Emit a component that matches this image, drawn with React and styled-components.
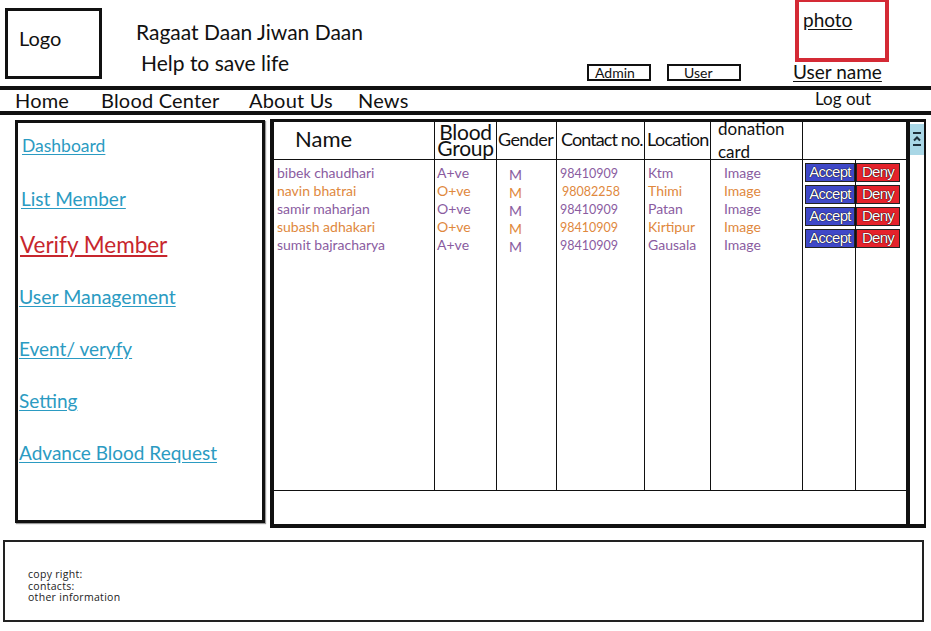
import styled, { createGlobalStyle } from 'styled-components'

const GlobalStyle = createGlobalStyle`
   body {
      margin: 0;
      background: #fff;
      font-family: Lato, "Open Sans", "Liberation Sans", sans-serif;
      color: #111;
   }
`

const Page = styled.div`
   width: 931px;
   height: 631px;
   overflow: hidden;
`

// header
const Header = styled.header`
   display: flex;
   align-items: flex-start;
   height: 86px;
`
const LogoBox = styled.div`
   margin: 8px 0 0 5px;
   width: 97px;
   height: 71px;
   box-sizing: border-box;
   border: 3px solid #111;
   display: flex;
   align-items: center;
   padding: 0 0 12px 11px;
   font-size: 20px;
`
const TitleBlock = styled.div`
   margin-left: 34px;
   width: 451px;
   padding-top: 19px;
`
const Title = styled.div`
   font-size: 21px;
   line-height: 26px;
   margin-left: ${(props) => props.$indent || 0}px;
   margin-top: ${(props) => props.$mt || 0}px;
`
const Roles = styled.div`
   display: flex;
   gap: 16px;
   margin-top: 64px;
`
const RoleBox = styled.div`
   width: ${(props) => props.$w}px;
   height: 17px;
   box-sizing: border-box;
   border: 2px solid #111;
   font-size: 14px;
   line-height: 13px;
   padding-left: ${(props) => props.$pl}px;
`
const UserBlock = styled.div`
   margin-left: 52px;
   display: flex;
   flex-direction: column;
`
const PhotoBox = styled.div`
   margin-left: 2px;
   width: 94px;
   height: 62px;
   box-sizing: border-box;
   border: 4px solid #d42a35;
   border-top-width: 2px;
   padding: 7px 0 0 4px;
   font-size: 19px;
   line-height: 22px;
   text-decoration: underline;
   text-underline-offset: 2px;
`
const UserName = styled.div`
   font-size: 19px;
   line-height: 20px;
   text-decoration: underline;
   text-underline-offset: 2px;
`

// nav bar
const Nav = styled.nav`
   display: flex;
   height: 21px;
   border-top: 4px solid #111;
   border-bottom: 4px solid #111;
   padding-left: 15px;
`
const NavItem = styled.div`
   width: ${(props) => props.$w}px;
   flex: none;
   font-size: ${(props) => (props.$small ? 17 : 20)}px;
   line-height: ${(props) => (props.$small ? 17 : 21)}px;
   letter-spacing: ${(props) => (props.$small ? 0 : 0.2)}px;
`

// body
const Main = styled.main`
   display: flex;
   align-items: flex-start;
`
const Sidebar = styled.aside`
   margin: 5px 0 0 15px;
   width: 250px;
   height: 403px;
   box-sizing: border-box;
   border: 3px solid #111;
   display: flex;
   flex-direction: column;
   align-items: flex-start;
   padding: 11px 0 0 2px;
   box-shadow: 1px 1px 1px #999;
`
const SideLink = styled.a`
   display: block;
   margin-top: ${(props) => props.$mt}px;
   margin-left: ${(props) => props.$ml || 0}px;
   font-size: ${(props) => props.$size}px;
   line-height: ${(props) => props.$lh}px;
   color: ${(props) => (props.$active ? '#c7262d' : '#2b9bc2')};
   text-decoration: underline;
   text-underline-offset: 2px;
   cursor: pointer;
`

const TablePanel = styled.section`
   margin: 4px 0 0 5px;
   width: 656px;
   height: 409px;
   box-sizing: border-box;
   display: flex;
   border-top: 3px solid #111;
   border-left: 4px solid #111;
   border-bottom: 4px solid #111;
   border-right: 2px solid #111;
`
const TableArea = styled.div`
   flex: 1;
   display: flex;
   flex-direction: column;
`
const cols = '161px 62px 60px 88px 66px 92px 53px 50px'
const HeadRow = styled.div`
   display: grid;
   grid-template-columns: ${cols};
   grid-template-rows: 37px;
   height: 37px;
   border-bottom: 1.5px solid #111;
`
const HeadCell = styled.div`
   grid-column: span ${(props) => props.$span || 1};
   box-sizing: border-box;
   border-right: ${(props) => (props.$last ? 'none' : '1px solid #111')};
   display: flex;
   flex-direction: column;
   justify-content: center;
   align-items: ${(props) => (props.$center ? 'center' : 'flex-start')};
   padding-left: ${(props) => props.$pl || 0}px;
   padding-bottom: ${(props) => props.$pb ?? 3}px;
   font-size: ${(props) => props.$size || 18}px;
   line-height: ${(props) => props.$lh || 22}px;
   letter-spacing: ${(props) => props.$ls || 0}px;
   white-space: nowrap;
`
const Body = styled.div`
   display: grid;
   grid-template-columns: ${cols};
   height: 330px;
`
const Col = styled.div`
   border-right: ${(props) => (props.$last ? 'none' : '1px solid #111')};
   padding: ${(props) => props.$pt || 4}px 0 0 ${(props) => props.$pl || 3}px;
   font-size: ${(props) => props.$size || 14}px;
   line-height: 18px;
`
const Entry = styled.div`
   color: ${(props) => (props.$odd ? '#e0883d' : '#8a5c9f')};
   margin-left: ${(props) => props.$shift || 0}px;
   white-space: nowrap;
`
const BtnCol = styled.div`
   border-right: ${(props) => (props.$last ? 'none' : '1px solid #111')};
   display: flex;
   flex-direction: column;
   gap: 3px;
   padding: 3px 0 0 ${(props) => props.$pl || 0}px;
`
const ActionBtn = styled.button`
   width: ${(props) => props.$w}px;
   height: 19px;
   box-sizing: border-box;
   border: 1px solid #222;
   background: ${(props) => (props.$deny ? '#e5222b' : '#3f48c8')};
   color: #fff;
   font-family: "Liberation Sans", Arial, sans-serif;
   font-size: 15px;
   line-height: 16px;
   letter-spacing: -0.7px;
   padding: 0 0 1px;
   overflow: hidden;
   white-space: nowrap;
   text-shadow: 0 0 1px #000, 0 0 1px #000;
   cursor: pointer;
`
const BottomBand = styled.div`
   flex: 1;
   border-top: 1px solid #111;
`
const ScrollCol = styled.div`
   width: 14px;
   border-left: 4px solid #111;
   padding-top: 2px;
`
const Thumb = styled.div`
   height: 31px;
   background: #a9d7e6;
   display: flex;
   justify-content: center;
   align-items: center;
`

// footer
const Footer = styled.footer`
   margin: 12px 0 0 3px;
   width: 921px;
   height: 82px;
   box-sizing: border-box;
   border: 2px solid #222;
   padding: 27px 0 0 23px;
   font-family: "Open Sans", sans-serif;
   font-size: 10.5px;
   line-height: 11.5px;
   letter-spacing: 0.3px;
   color: #222;
`

const members = [
   ['bibek chaudhari', 'A+ve', '98410909', 'Ktm'],
   ['navin bhatrai', 'O+ve', '98082258', 'Thimi'],
   ['samir maharjan', 'O+ve', '98410909', 'Patan'],
   ['subash adhakari', 'O+ve', '98410909', 'Kirtipur'],
   ['sumit bajracharya', 'A+ve', '98410909', 'Gausala'],
]

const sideLinks = [
   { label: 'Dashboard', mt: 0, ml: 2, size: 17.5, lh: 24 },
   { label: 'List Member', mt: 28, ml: 1, size: 19, lh: 26 },
   { label: 'Verify Member', mt: 18, size: 22.5, lh: 30, active: true },
   { label: 'User Management', mt: 24, ml: -1, size: 19.5, lh: 26 },
   { label: 'Event/ veryfy', mt: 26, ml: -1, size: 19, lh: 26 },
   { label: 'Setting', mt: 26, ml: -1, size: 19, lh: 26 },
   { label: 'Advance Blood Request', mt: 26, ml: -1, size: 19, lh: 26 },
]

function App() {
   return (
      <Page>
         <GlobalStyle />
         <Header>
            <LogoBox>Logo</LogoBox>
            <TitleBlock>
               <Title>Ragaat Daan Jiwan Daan</Title>
               <Title $indent={5} $mt={5}>
                  Help to save life
               </Title>
            </TitleBlock>
            <Roles>
               <RoleBox $w={64} $pl={6}>Admin</RoleBox>
               <RoleBox $w={74} $pl={15}>User</RoleBox>
            </Roles>
            <UserBlock>
               <PhotoBox>photo</PhotoBox>
               <UserName>User name</UserName>
            </UserBlock>
         </Header>

         <Nav>
            <NavItem $w={86}>Home</NavItem>
            <NavItem $w={148}>Blood Center</NavItem>
            <NavItem $w={109}>About Us</NavItem>
            <NavItem $w={457}>News</NavItem>
            <NavItem $w={100} $small>
               Log out
            </NavItem>
         </Nav>

         <Main>
            <Sidebar>
               {sideLinks.map((l) => (
                  <SideLink key={l.label} $mt={l.mt} $ml={l.ml} $size={l.size} $lh={l.lh} $active={l.active}>
                     {l.label}
                  </SideLink>
               ))}
            </Sidebar>

            <TablePanel>
               <TableArea>
                  <HeadRow>
                     <HeadCell $pl={21} $size={22}>
                        Name
                     </HeadCell>
                     <HeadCell $center $size={21} $lh={16} $ls={-0.3} $pb={1}>
                        <span>Blood</span>
                        <span>Group</span>
                     </HeadCell>
                     <HeadCell $pl={1} $size={18} $ls={-0.6}>
                        Gender
                     </HeadCell>
                     <HeadCell $pl={4} $size={18} $ls={-0.9}>
                        Contact no.
                     </HeadCell>
                     <HeadCell $pl={2} $size={18} $ls={-0.7}>
                        Location
                     </HeadCell>
                     <HeadCell $pl={7} $size={17} $lh={23} $pb={1}>
                        <span>donation</span>
                        <span>card</span>
                     </HeadCell>
                     <HeadCell $span={2} $last />
                  </HeadRow>
                  <Body>
                     <Col>
                        {members.map((m, i) => (
                           <Entry key={m[0]} $odd={i % 2}>
                              {m[0]}
                           </Entry>
                        ))}
                     </Col>
                     <Col $pl={2}>
                        {members.map((m, i) => (
                           <Entry key={m[0]} $odd={i % 2}>
                              {m[1]}
                           </Entry>
                        ))}
                     </Col>
                     <Col $pl={12} $pt={6}>
                        {members.map((m, i) => (
                           <Entry key={m[0]} $odd={i % 2}>
                              M
                           </Entry>
                        ))}
                     </Col>
                     <Col $pl={3} $size={12.5} $pt={5}>
                        {members.map((m, i) => (
                           <Entry key={m[0]} $odd={i % 2} $shift={i === 1 ? 2 : 0}>
                              {m[2]}
                           </Entry>
                        ))}
                     </Col>
                     <Col $pl={3}>
                        {members.map((m, i) => (
                           <Entry key={m[0]} $odd={i % 2}>
                              {m[3]}
                           </Entry>
                        ))}
                     </Col>
                     <Col $pl={13}>
                        {members.map((m, i) => (
                           <Entry key={m[0]} $odd={i % 2}>
                              Image
                           </Entry>
                        ))}
                     </Col>
                     <BtnCol $pl={2}>
                        {[0, 1, 2, 3].map((n) => (
                           <ActionBtn key={n} $w={50}>
                              Accept
                           </ActionBtn>
                        ))}
                     </BtnCol>
                     <BtnCol $last>
                        {[0, 1, 2, 3].map((n) => (
                           <ActionBtn key={n} $w={44} $deny>
                              Deny
                           </ActionBtn>
                        ))}
                     </BtnCol>
                  </Body>
                  <BottomBand />
               </TableArea>
               <ScrollCol>
                  <Thumb>
                     <svg width="10" height="18" viewBox="0 0 10 18">
                        <path d="M1 2h8M2 9.5l3-3 3 3M1 14h8" stroke="#1d2f3a" strokeWidth="2" fill="none" />
                     </svg>
                  </Thumb>
               </ScrollCol>
            </TablePanel>
         </Main>

         <Footer>
            <div>copy right:</div>
            <div>contacts:</div>
            <div>other information</div>
         </Footer>
      </Page>
   )
}

export default App
